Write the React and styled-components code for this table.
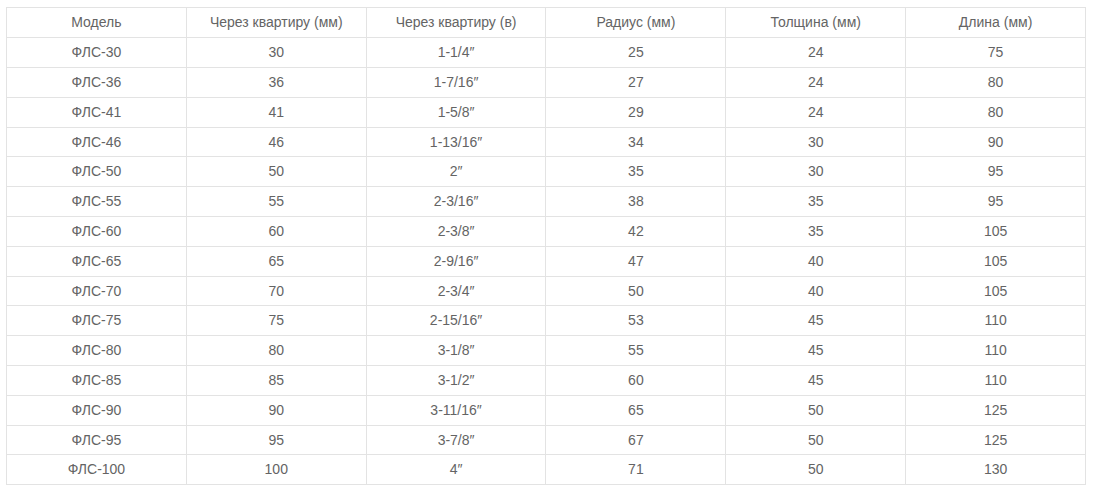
import React from "react";
import styled, { createGlobalStyle } from "styled-components";

const GlobalStyle = createGlobalStyle`
  html, body {
    margin: 0;
    padding: 0;
    background: #ffffff;
  }
  body {
    font-family: "Liberation Sans", Arial, sans-serif;
  }
`;

const Page = styled.div`
  padding: 7px 0 0 6px;
`;

const Table = styled.table`
  width: 1080px;
  border-collapse: collapse;
  table-layout: fixed;
  font-size: 14px;
  color: #646464;
`;

const HeadCell = styled.th`
  font-weight: 400;
  border: 1px solid #e3e3e3;
  padding: 5px 4px;
  line-height: 19.3px;
  text-align: center;
`;

const Cell = styled.td`
  border: 1px solid #e3e3e3;
  padding: 5px 4px;
  line-height: 18.8px;
  text-align: center;
`;

const columns = [
  "Модель",
  "Через квартиру (мм)",
  "Через квартиру (в)",
  "Радиус (мм)",
  "Толщина (мм)",
  "Длина (мм)",
];

const rows = [
  ["ФЛС-30", "30", "1-1/4″", "25", "24", "75"],
  ["ФЛС-36", "36", "1-7/16″", "27", "24", "80"],
  ["ФЛС-41", "41", "1-5/8″", "29", "24", "80"],
  ["ФЛС-46", "46", "1-13/16″", "34", "30", "90"],
  ["ФЛС-50", "50", "2″", "35", "30", "95"],
  ["ФЛС-55", "55", "2-3/16″", "38", "35", "95"],
  ["ФЛС-60", "60", "2-3/8″", "42", "35", "105"],
  ["ФЛС-65", "65", "2-9/16″", "47", "40", "105"],
  ["ФЛС-70", "70", "2-3/4″", "50", "40", "105"],
  ["ФЛС-75", "75", "2-15/16″", "53", "45", "110"],
  ["ФЛС-80", "80", "3-1/8″", "55", "45", "110"],
  ["ФЛС-85", "85", "3-1/2″", "60", "45", "110"],
  ["ФЛС-90", "90", "3-11/16″", "65", "50", "125"],
  ["ФЛС-95", "95", "3-7/8″", "67", "50", "125"],
  ["ФЛС-100", "100", "4″", "71", "50", "130"],
];

export default function App() {
  return (
    <>
      <GlobalStyle />
      <Page>
        <Table>
          <thead>
            <tr>
              {columns.map((c) => (
                <HeadCell key={c}>{c}</HeadCell>
              ))}
            </tr>
          </thead>
          <tbody>
            {rows.map((row) => (
              <tr key={row[0]}>
                {row.map((v, i) => (
                  <Cell key={i}>{v}</Cell>
                ))}
              </tr>
            ))}
          </tbody>
        </Table>
      </Page>
    </>
  );
}
